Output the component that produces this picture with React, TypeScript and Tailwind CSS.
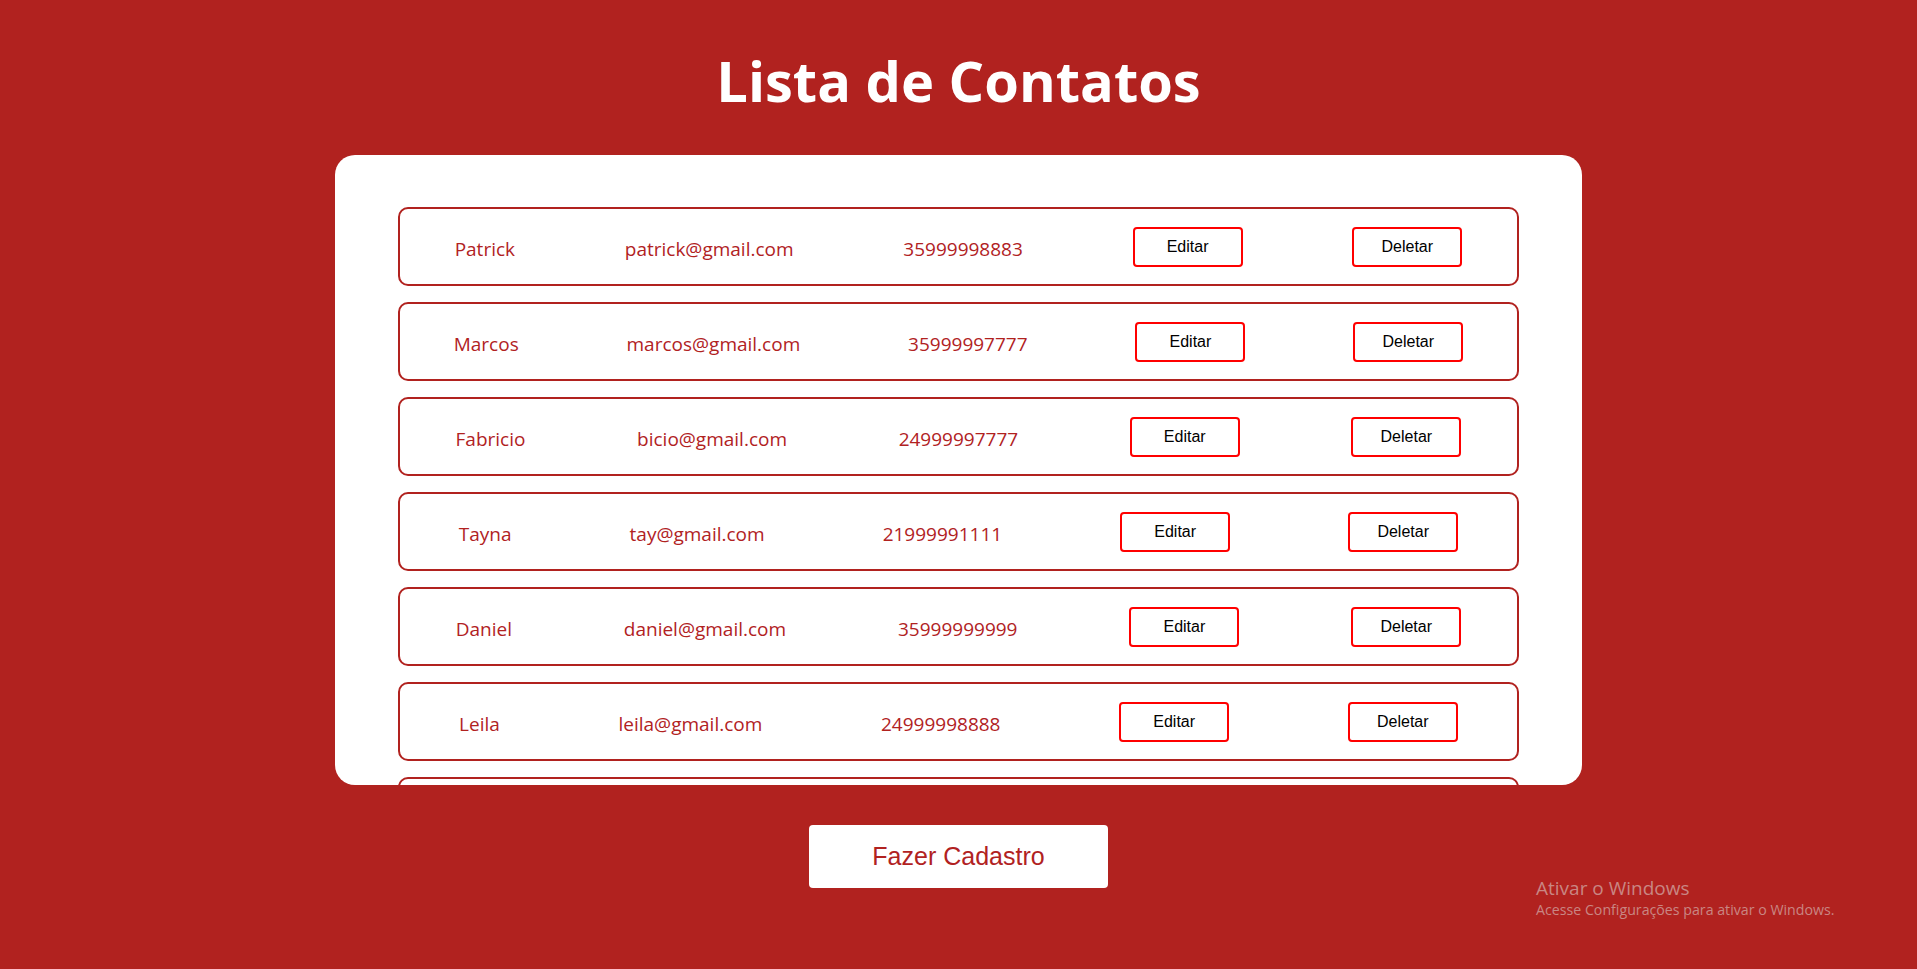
const contatos = [
  { nome: "Patrick", email: "patrick@gmail.com", telefone: "35999998883" },
  { nome: "Marcos", email: "marcos@gmail.com", telefone: "35999997777" },
  { nome: "Fabricio", email: "bicio@gmail.com", telefone: "24999997777" },
  { nome: "Tayna", email: "tay@gmail.com", telefone: "21999991111" },
  { nome: "Daniel", email: "daniel@gmail.com", telefone: "35999999999" },
  { nome: "Leila", email: "leila@gmail.com", telefone: "24999998888" },
  { nome: "Lucas", email: "lucas@gmail.com", telefone: "35999995555" },
];

export default function App() {
  return (
    <div className="relative min-h-screen bg-[#b1221f] flex flex-col items-center font-['Open_Sans',sans-serif]">
      <h1 className="pt-[41px] text-[56px] leading-[79px] font-bold text-white">
        Lista de Contatos
      </h1>

      <div className="mt-[35px] w-[65%] h-[630px] bg-white rounded-[20px] overflow-hidden pt-[52px]">
        <div className="w-[90%] mx-auto flex flex-col gap-4">
          {contatos.map((c) => (
            <div
              key={c.email}
              className="h-[79px] flex items-center justify-around border-2 border-[#b1221f] rounded-[10px] text-[19px] text-[#b1221f]"
            >
              <span className="pt-[5px]">{c.nome}</span>
              <span className="pt-[5px]">{c.email}</span>
              <span className="pt-[5px]">{c.telefone}</span>
              <button className="w-[110px] h-[40px] bg-white border-2 border-[#ff0000] rounded-[4px] text-black text-base font-['Liberation_Sans',Arial,sans-serif]">
                Editar
              </button>
              <button className="w-[110px] h-[40px] bg-white border-2 border-[#ff0000] rounded-[4px] text-black text-base font-['Liberation_Sans',Arial,sans-serif]">
                Deletar
              </button>
            </div>
          ))}
        </div>
      </div>

      <button className="mt-[40px] w-[299px] h-[63px] bg-white rounded-[4px] text-[25px] text-[#b1221f] font-['Liberation_Sans',Arial,sans-serif]">
        Fazer Cadastro
      </button>

      {/* marca d'agua do windows */}
      <div className="absolute left-[1536px] top-[875px] text-[#c98683] pointer-events-none">
        <p className="text-[19px] leading-[26px]">Ativar o Windows</p>
        <p className="text-[14.2px] leading-[18px]">Acesse Configurações para ativar o Windows.</p>
      </div>
    </div>
  );
}
